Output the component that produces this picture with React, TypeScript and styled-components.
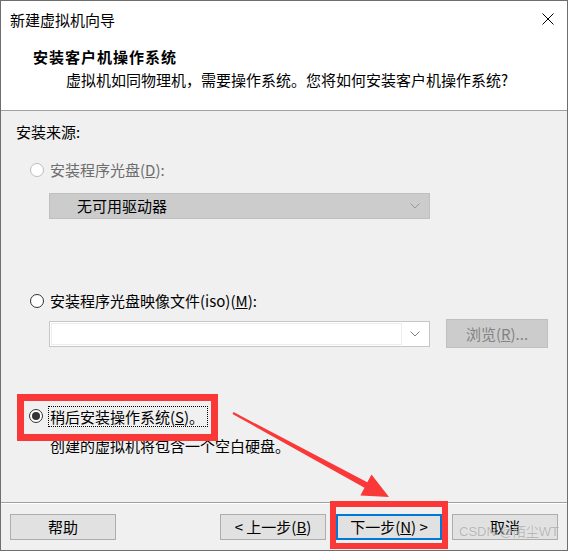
import React from "react";
import styled, { createGlobalStyle } from "styled-components";

const GlobalStyle = createGlobalStyle`
  html, body { margin: 0; padding: 0; background: #ffffff; }
  body { font-family: "Noto Sans CJK SC", "Noto Sans", sans-serif; }
  * { box-sizing: border-box; }
`;

const Stage = styled.div`
  position: relative;
  width: 570px;
  height: 551px;
  overflow: hidden;
`;

const Window = styled.div`
  width: 568px;
  height: 551px;
  border: 1px solid #6e6e6e;
  display: flex;
  flex-direction: column;
  font-family: "Noto Sans CJK SC", sans-serif;
  font-size: 15px;
  color: #000;
`;

const Top = styled.div`
  height: 110px;
  background: #ffffff;
  border-bottom: 1px solid #a0a0a0;
  display: flex;
  flex-direction: column;
`;

const TitleBar = styled.div`
  height: 38px;
  display: flex;
  align-items: center;
  justify-content: space-between;
  padding: 0 13px 0 9px;
  font-size: 15px;
  line-height: 20px;
`;

const CloseIcon = styled.svg`
  width: 12px;
  height: 12px;
  margin-top: -2px;
`;

const Heading = styled.div`
  margin: 8px 0 0 32px;
  font-weight: bold;
  font-size: 15px;
  letter-spacing: 1px;
  line-height: 20px;
`;

const Subtitle = styled.div`
  margin: 3px 0 0 65px;
  line-height: 20px;
`;

const Body = styled.div`
  flex: 1;
  background: #f0f0f0;
  display: flex;
  flex-direction: column;
  padding: 11px 0 0 15px;
`;

const Text = styled.div<{ $indent?: number; $gap?: number; $muted?: boolean }>`
  line-height: 20px;
  margin-left: ${(p) => p.$indent ?? 0}px;
  margin-top: ${(p) => p.$gap ?? 0}px;
  color: ${(p) => (p.$muted ? "#6d6d6d" : "#000")};
`;

const RadioRow = styled.div<{ $indent: number; $gap: number; $spacing: number }>`
  display: flex;
  align-items: center;
  height: 20px;
  margin-top: ${(p) => p.$gap}px;
  padding-left: ${(p) => p.$indent}px;
  gap: ${(p) => p.$spacing}px;
`;

const RadioCircle = styled.span<{ $disabled?: boolean; $checked?: boolean }>`
  width: 14px;
  height: 14px;
  border-radius: 50%;
  border: 1px solid ${(p) => (p.$disabled ? "#bcbcbc" : "#333333")};
  background: #ffffff;
  display: flex;
  align-items: center;
  justify-content: center;
  flex: none;
  &::after {
    content: "";
    display: ${(p) => (p.$checked ? "block" : "none")};
    width: 8px;
    height: 8px;
    border-radius: 50%;
    background: #333333;
  }
`;

const RadioLabel = styled.span<{ $muted?: boolean; $focused?: boolean }>`
  line-height: 20px;
  color: ${(p) => (p.$muted ? "#6d6d6d" : "#000")};
  padding: ${(p) => (p.$focused ? "0 3px 0 1px" : "0")};
  border: ${(p) => (p.$focused ? "1px dotted #000" : "none")};
  height: ${(p) => (p.$focused ? "21px" : "auto")};
  line-height: ${(p) => (p.$focused ? "19px" : "20px")};
`;

const Select = styled.div`
  margin: 13px 0 0 33px;
  width: 381px;
  height: 26px;
  background: #cccccc;
  border: 1px solid #bfbfbf;
  display: flex;
  align-items: center;
  justify-content: space-between;
  padding: 0 9px 0 27px;
  line-height: 20px;
`;

const Chevron = styled.svg<{ $color: string }>`
  width: 10px;
  height: 6px;
  stroke: ${(p) => p.$color};
  fill: none;
`;

const ComboRow = styled.div`
  margin: 8px 0 0 33px;
  display: flex;
  align-items: center;
  gap: 16px;
`;

const Combo = styled.div`
  width: 381px;
  height: 26px;
  background: #ffffff;
  border: 1px solid #c6c6c6;
  display: flex;
  align-items: center;
  padding: 0 9px 0 1px;
  gap: 8px;
`;

const ComboEdit = styled.div`
  flex: 1;
  height: 22px;
  border: 1px solid #ededed;
  background: #ffffff;
`;

const DisabledButton = styled.div`
  width: 102px;
  height: 29px;
  background: #cccccc;
  border: 1px solid #bfbfbf;
  color: #838383;
  display: flex;
  align-items: center;
  justify-content: center;
  line-height: 20px;
`;

const Footer = styled.div`
  height: 48px;
  border-top: 1px solid #a0a0a0;
  box-shadow: inset 0 1px 0 #ffffff;
  background: #f0f0f0;
  display: flex;
  align-items: flex-start;
  padding: 11px 9px 0 9px;
`;

const ButtonGroup = styled.div`
  margin-left: auto;
  display: flex;
  gap: 10px;
`;

const Button = styled.div<{ $default?: boolean }>`
  width: 106px;
  height: 26px;
  background: #e1e1e1;
  border: ${(p) => (p.$default ? "2px solid #0078d7" : "1px solid #adadad")};
  display: flex;
  align-items: center;
  justify-content: center;
  line-height: 20px;
  white-space: pre;
`;

const Overlay = styled.svg`
  position: absolute;
  left: 0;
  top: 0;
  width: 570px;
  height: 551px;
  pointer-events: none;
`;

const Watermark = styled.div`
  position: absolute;
  left: 459px;
  top: 523px;
  font-family: "Liberation Sans", "Noto Sans CJK SC", sans-serif;
  font-size: 13px;
  line-height: 18px;
  color: rgba(130, 130, 130, 0.55);
  text-shadow: 0 0 1px rgba(255, 255, 255, 0.8);
  pointer-events: none;
  white-space: nowrap;
`;

const RED = "#fb3838";

export default function App() {
  return (
    <>
      <GlobalStyle />
      <Stage>
        <Window>
          <Top>
            <TitleBar>
              <span>新建虚拟机向导</span>
              <CloseIcon viewBox="0 0 12 12">
                <path d="M0.5 0.5 L11.5 11.5 M11.5 0.5 L0.5 11.5" stroke="#000" strokeWidth="1" fill="none" />
              </CloseIcon>
            </TitleBar>
            <Heading>安装客户机操作系统</Heading>
            <Subtitle>虚拟机如同物理机，需要操作系统。您将如何安装客户机操作系统?</Subtitle>
          </Top>
          <Body>
            <Text>安装来源:</Text>
            <RadioRow $indent={14} $gap={18} $spacing={6}>
              <RadioCircle $disabled />
              <RadioLabel $muted>
                安装程序光盘(<u>D</u>):
              </RadioLabel>
            </RadioRow>
            <Select>
              <span>无可用驱动器</span>
              <Chevron $color="#999999" viewBox="0 0 10 6">
                <path d="M0.5 0.5 L5 5 L9.5 0.5" strokeWidth="1" />
              </Chevron>
            </Select>
            <RadioRow $indent={14} $gap={72} $spacing={6}>
              <RadioCircle />
              <RadioLabel>
                安装程序光盘映像文件(iso)(<u>M</u>):
              </RadioLabel>
            </RadioRow>
            <ComboRow>
              <Combo>
                <ComboEdit />
                <Chevron $color="#808080" viewBox="0 0 10 6">
                  <path d="M0.5 0.5 L5 5 L9.5 0.5" strokeWidth="1" />
                </Chevron>
              </Combo>
              <DisabledButton>
                浏览(<u>R</u>)...
              </DisabledButton>
            </ComboRow>
            <RadioRow $indent={13} $gap={58} $spacing={5}>
              <RadioCircle $checked />
              <RadioLabel $focused>
                稍后安装操作系统(<u>S</u>)。
              </RadioLabel>
            </RadioRow>
            <Text $indent={34} $gap={10}>
              创建的虚拟机将包含一个空白硬盘。
            </Text>
          </Body>
          <Footer>
            <Button>帮助</Button>
            <ButtonGroup>
              <Button>
                {"< 上一步("}
                <u>B</u>
                {")"}
              </Button>
              <Button $default>
                {"下一步("}
                <u>N</u>
                {") >"}
              </Button>
              <Button>取消</Button>
            </ButtonGroup>
          </Footer>
        </Window>
        <Overlay viewBox="0 0 570 551">
          <rect x="20.5" y="397.5" width="194" height="40" fill="none" stroke={RED} strokeWidth="7" />
          <rect x="333" y="504" width="112" height="42" fill="none" stroke={RED} strokeWidth="6" />
          <polygon
            points="233.5,412.1 367.3,482.3 371.5,474.4 389,497 360.4,495.6 364.5,487.7 232.5,413.9"
            fill={RED}
          />
        </Overlay>
        <Watermark>CSDN @陌尘WT</Watermark>
      </Stage>
    </>
  );
}
